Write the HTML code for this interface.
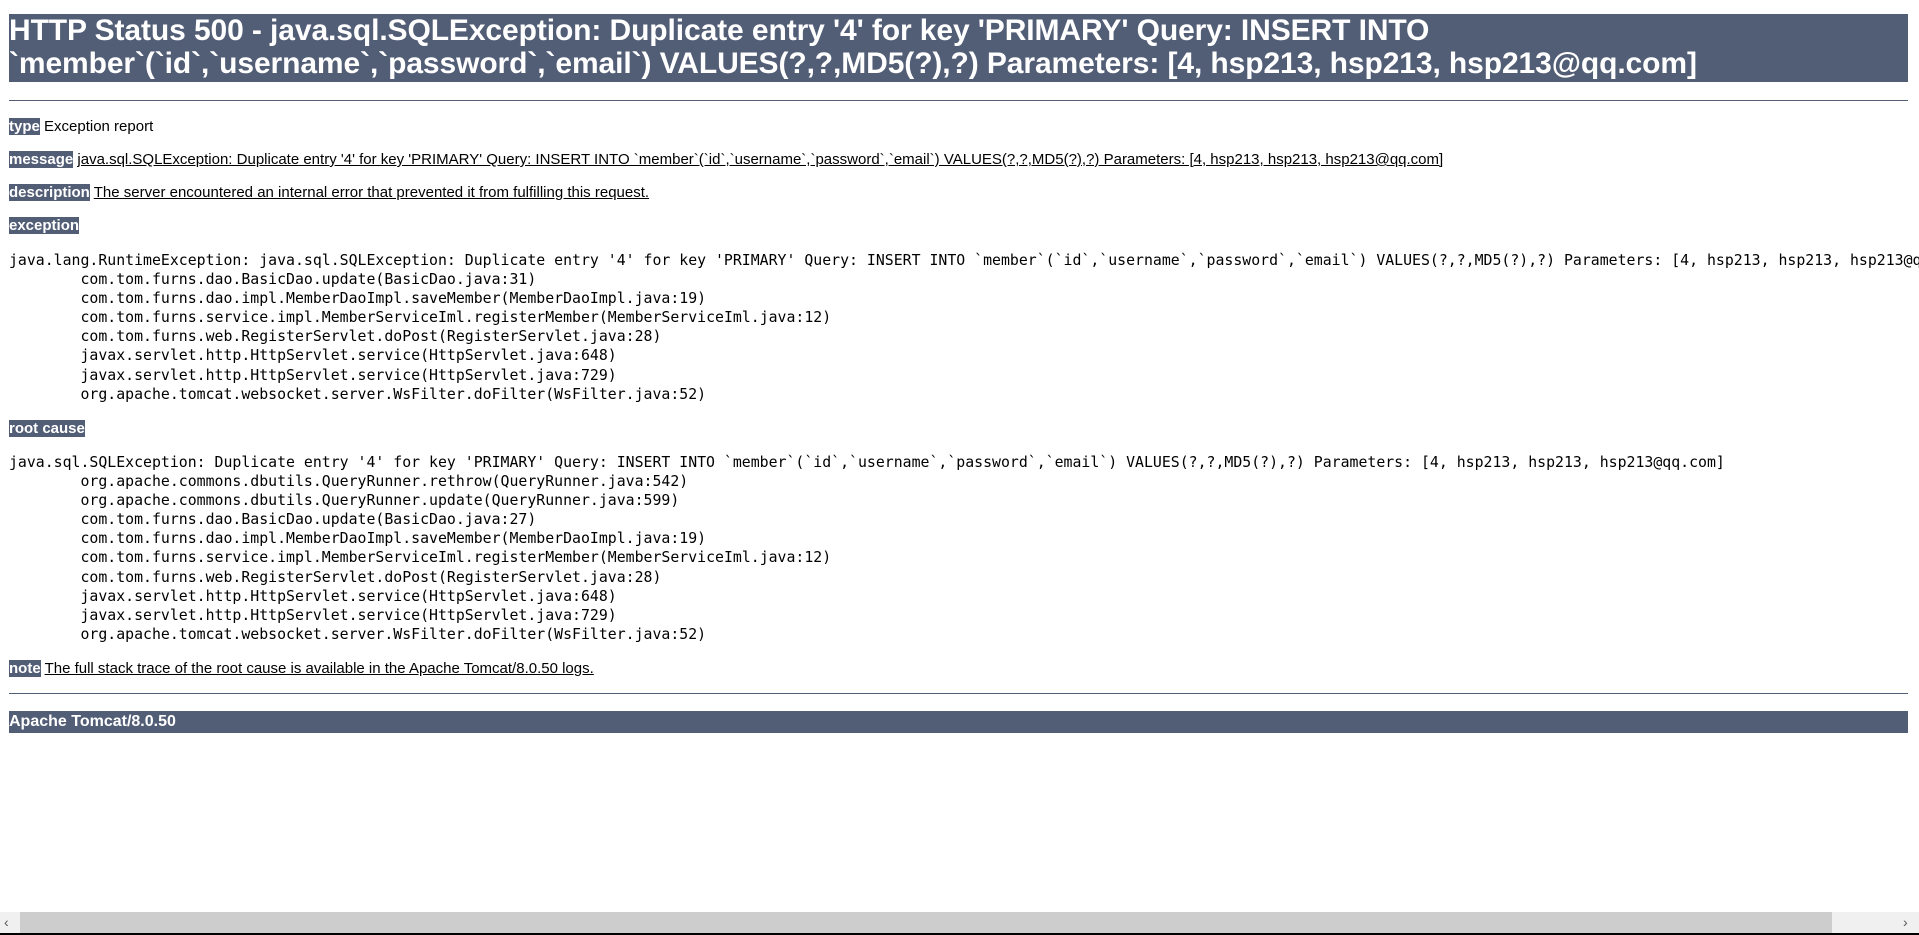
<!DOCTYPE html>
<html><head><meta charset="utf-8"><style>
html,body{margin:0;padding:0;background:#fff;width:1919px;height:935px;overflow:hidden}
body{font-family:"Liberation Sans",sans-serif;color:#000;position:relative}
.h1{position:absolute;left:9px;top:14px;width:1899px;height:68px;background:#525D76;color:#fff;font-weight:bold;font-size:30px;line-height:33px;white-space:nowrap;overflow:hidden;letter-spacing:-0.1px}
.hr{position:absolute;left:9px;width:1899px;height:1px;background:#525D76}
.row{position:absolute;left:9px;font-size:15px;line-height:18px;white-space:nowrap}
.lbl{background:#525D76;color:#fff;font-weight:bold}
.u{text-decoration:underline}
pre{position:absolute;left:9px;margin:0;font-family:"DejaVu Sans Mono","Liberation Mono",monospace;font-size:14.85px;line-height:19.1px;white-space:pre}
.foot{position:absolute;left:9px;top:711px;width:1899px;height:22px;background:#525D76;color:#fff;font-weight:bold;font-size:16px;line-height:22px}
.sb{position:absolute;left:0;top:912px;width:1919px;height:21px;background:#f0f0f0}
.thumb{position:absolute;left:20px;top:912px;width:1812px;height:21px;background:#cdcdcd}
.bot{position:absolute;left:0;top:933px;width:1919px;height:2px;background:#000}
</style></head><body>
<div class="h1">HTTP Status 500 - java.sql.SQLException: Duplicate entry '4' for key 'PRIMARY' Query: INSERT INTO<br>`member`(`id`,`username`,`password`,`email`) VALUES(?,?,MD5(?),?) Parameters: [4, hsp213, hsp213, hsp213@qq.com]</div>
<div class="hr" style="top:100px"></div>
<div class="row" style="top:118px"><span class="lbl">type</span> Exception report</div>
<div class="row" style="top:151px"><span class="lbl">message</span> <span class="u">java.sql.SQLException: Duplicate entry '4' for key 'PRIMARY' Query: INSERT INTO `member`(`id`,`username`,`password`,`email`) VALUES(?,?,MD5(?),?) Parameters: [4, hsp213, hsp213, hsp213@qq.com]</span></div>
<div class="row" style="top:184px"><span class="lbl">description</span> <span class="u">The server encountered an internal error that prevented it from fulfilling this request.</span></div>
<div class="row" style="top:217px"><span class="lbl">exception</span></div>
<pre style="top:251px">java.lang.RuntimeException: java.sql.SQLException: Duplicate entry '4' for key 'PRIMARY' Query: INSERT INTO `member`(`id`,`username`,`password`,`email`) VALUES(?,?,MD5(?),?) Parameters: [4, hsp213, hsp213, hsp213@qq.com]
	com.tom.furns.dao.BasicDao.update(BasicDao.java:31)
	com.tom.furns.dao.impl.MemberDaoImpl.saveMember(MemberDaoImpl.java:19)
	com.tom.furns.service.impl.MemberServiceIml.registerMember(MemberServiceIml.java:12)
	com.tom.furns.web.RegisterServlet.doPost(RegisterServlet.java:28)
	javax.servlet.http.HttpServlet.service(HttpServlet.java:648)
	javax.servlet.http.HttpServlet.service(HttpServlet.java:729)
	org.apache.tomcat.websocket.server.WsFilter.doFilter(WsFilter.java:52)
</pre>
<div class="row" style="top:420px"><span class="lbl">root cause</span></div>
<pre style="top:453px">java.sql.SQLException: Duplicate entry '4' for key 'PRIMARY' Query: INSERT INTO `member`(`id`,`username`,`password`,`email`) VALUES(?,?,MD5(?),?) Parameters: [4, hsp213, hsp213, hsp213@qq.com]
	org.apache.commons.dbutils.QueryRunner.rethrow(QueryRunner.java:542)
	org.apache.commons.dbutils.QueryRunner.update(QueryRunner.java:599)
	com.tom.furns.dao.BasicDao.update(BasicDao.java:27)
	com.tom.furns.dao.impl.MemberDaoImpl.saveMember(MemberDaoImpl.java:19)
	com.tom.furns.service.impl.MemberServiceIml.registerMember(MemberServiceIml.java:12)
	com.tom.furns.web.RegisterServlet.doPost(RegisterServlet.java:28)
	javax.servlet.http.HttpServlet.service(HttpServlet.java:648)
	javax.servlet.http.HttpServlet.service(HttpServlet.java:729)
	org.apache.tomcat.websocket.server.WsFilter.doFilter(WsFilter.java:52)
</pre>
<div class="row" style="top:660px"><span class="lbl">note</span> <span class="u">The full stack trace of the root cause is available in the Apache Tomcat/8.0.50 logs.</span></div>
<div class="hr" style="top:693px"></div>
<div class="foot">Apache Tomcat/8.0.50</div>
<div class="sb"></div><div class="thumb"></div>
<div style="position:absolute;left:4px;top:914px;font-size:14px;color:#555">&#8249;</div>
<div style="position:absolute;left:1903px;top:914px;font-size:14px;color:#555">&#8250;</div>
<div class="bot"></div>
</body></html>
